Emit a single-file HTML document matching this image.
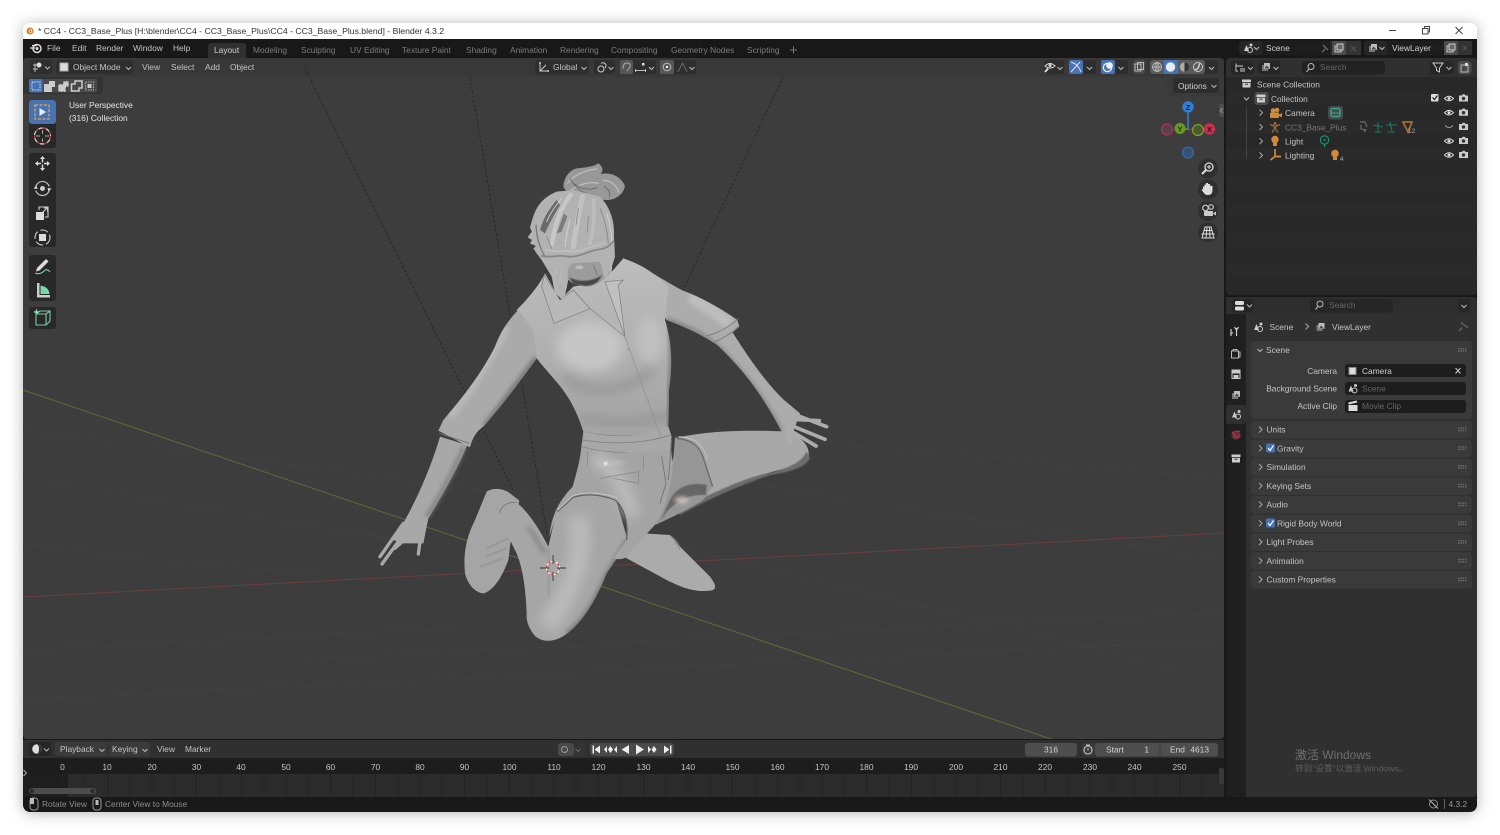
<!DOCTYPE html>
<html lang="en"><head><meta charset="utf-8"><title>Blender 4.3.2</title>
<style>
html,body{margin:0;padding:0;width:1500px;height:835px;overflow:hidden;background:#fff}
svg{display:block;filter:blur(.35px)}
text{font-family:"Liberation Sans","Noto Sans CJK SC",sans-serif;font-size:8.4px;fill:#c4c4c4}
.d{fill:#8a8a8a}.m{fill:#7c7c7c}.w{fill:#d0d0d0}.e{text-anchor:end}.c{text-anchor:middle}.f{fill:#666}
.ic{fill:none;stroke:#c8c8c8;stroke-width:1.1}
</style></head><body>
<svg width="1500" height="835" viewBox="0 0 1500 835" xmlns="http://www.w3.org/2000/svg">
<defs>
<filter id="sh" x="-30%" y="-30%" width="160%" height="160%"><feDropShadow dx="0" dy="1" stdDeviation="7" flood-color="#000" flood-opacity=".3"/></filter>
<filter id="b1" x="-50%" y="-50%" width="200%" height="200%"><feGaussianBlur stdDeviation="16"/></filter>
<filter id="b2" x="-50%" y="-50%" width="200%" height="200%"><feGaussianBlur stdDeviation="6"/></filter>
<filter id="b3" x="-20%" y="-20%" width="140%" height="140%"><feGaussianBlur stdDeviation="1.500"/></filter>
<linearGradient id="tg" x1="0" y1="0" x2="0" y2="1"><stop offset="0" stop-color="#bdbdbd"/><stop offset="1" stop-color="#a4a4a4"/></linearGradient>
<clipPath id="win"><rect x="23" y="23" width="1454" height="789" rx="7"/></clipPath>
<clipPath id="vp"><rect x="23" y="58" width="1201" height="681" rx="4"/></clipPath>
<clipPath id="cLeg"><path d="M470 1058C505 1085 540 1140 565 1190L590 1080 640 1030 765 1040 803 1170C790 1200 760 1240 740 1270C700 1370 660 1420 622 1450C580 1482 545 1475 525 1458C505 1435 498 1410 500 1390C497 1320 490 1260 470 1210C440 1150 425 1120 418 1090C425 1065 445 1055 470 1058Z"/></clipPath>
<clipPath id="cTorso"><path d="M470 480C500 450 535 410 555 370L600 450 640 410 720 395 760 360 790 325C850 345 890 375 925 410L915 510C940 590 935 660 927 720L925 840C820 862 740 860 670 845C650 780 625 740 600 708C570 672 550 650 530 625Z"/></clipPath>
<clipPath id="cRA"><path d="M790 325C850 350 910 390 965 420C1030 445 1090 480 1132 510L1138 530 1118 548C1170 630 1220 700 1272 750L1320 790 1290 870 1265 845C1200 720 1140 650 1072 585C1010 545 960 525 920 510Z"/></clipPath>
<clipPath id="cLA"><path d="M475 480C440 515 420 550 405 590C365 670 310 740 250 810L235 842 250 858C225 940 180 1040 130 1110L100 1170 165 1170 190 1180 205 1105C250 1030 290 960 322 885L332 888C340 855 355 840 370 830C440 750 490 680 530 625L520 540Z"/></clipPath>
<clipPath id="cHair"><path d="M515 215C530 160 555 140 590 125L640 120 720 140C750 170 765 215 762 260L765 320C755 355 745 375 735 390L720 335 640 340C620 350 622 370 625 390L612 450 585 430 575 380 545 330 530 310 520 295 528 288 510 280 516 270 503 262 515 245 510 232Z"/></clipPath>
<path id="cd" d="M-2.500-1 0 1.500 2.500-1" fill="none" stroke="#bbb" stroke-width="1"/>
<path id="cr" d="M-1.500-3 1.500 0-1.500 3" fill="none" stroke="#aaa" stroke-width="1"/>
<g id="eye"><path d="M-4.500 0Q0-4.500 4.500 0Q0 4.500-4.500 0Z" fill="none" stroke="#ddd" stroke-width="1"/><circle r="1.500" fill="#ddd"/></g>
<g id="cam"><path d="M-4.500-2.500H-1.500L-.8-3.700H1.200L2-2.500H4.500V3.500H-4.500Z" fill="#ccc"/><circle cy=".5" r="1.700" fill="#333"/></g>
<g id="dots" fill="#6e6e6e"><rect x="0" y="0" width="1.400" height="1.400"/><rect x="2.300" y="0" width="1.400" height="1.400"/><rect x="4.600" y="0" width="1.400" height="1.400"/><rect x="6.900" y="0" width="1.400" height="1.400"/><rect x="0" y="2.300" width="1.400" height="1.400"/><rect x="2.300" y="2.300" width="1.400" height="1.400"/><rect x="4.600" y="2.300" width="1.400" height="1.400"/><rect x="6.900" y="2.300" width="1.400" height="1.400"/></g>
<g id="scn"><path d="M-4 3 -1.500-3 1 3Z" fill="#ccc"/><circle cx="3" cy="-3" r="1.500" fill="#ccc"/><circle cx="2" cy="2" r="2.500" fill="none" stroke="#ccc"/></g>
<g id="vl"><rect x="-4" y="-2" width="6" height="6" fill="#777"/><rect x="-2" y="-4" width="6" height="6" fill="#bbb"/><path d="M-1.500 1.500 .5-1.500 3.500 1.500Z" fill="#444"/></g>
<g id="dup"><rect x="-4" y="-2" width="6" height="6" fill="none" stroke="#ccc"/><rect x="-2" y="-4" width="6" height="6" fill="#666" stroke="#ccc"/></g>
<g id="col"><rect x="-4.500" y="-4" width="9" height="2.500" fill="#ccc"/><path d="M-4-.8H4V4H-4Z" fill="#ccc"/><rect x="-1.500" y=".2" width="3" height="1" fill="#333"/></g>
</defs>

<rect x="23" y="23" width="1454" height="789" rx="7" fill="#fff" filter="url(#sh)"/>
<g clip-path="url(#win)">
<rect x="23" y="23" width="1454" height="16" fill="#fff"/>
<rect x="23" y="39" width="1454" height="773" fill="#181818"/>

<!-- title bar -->
<circle cx="30" cy="31" r="3.500" fill="#e87d0d"/><circle cx="30.500" cy="31" r="1.700" fill="#fff"/><circle cx="30.500" cy="31" r=".9" fill="#2c5f9e"/>
<text x="38" y="34" style="font-size:8.670px;fill:#333">* CC4 - CC3_Base_Plus [H:\blender\CC4 - CC3_Base_Plus\CC4 - CC3_Base_Plus.blend] - Blender 4.3.2</text>
<path d="M1389 30.500H1396" stroke="#444"/><rect x="1422.500" y="28.500" width="5.500" height="5.500" fill="none" stroke="#444"/><path d="M1424.500 28V26.500H1429.500V32H1428.500" fill="none" stroke="#444"/><path d="M1455.500 27 1462.500 34M1462.500 27 1455.500 34" stroke="#444"/>

<!-- top bar -->
<g transform="translate(36 48)"><path d="M-6 0H-1M-4-2.500H1" stroke="#ddd" stroke-width="1.300"/><circle cx="1" cy=".5" r="4" fill="none" stroke="#ddd" stroke-width="1.500"/><circle cx="1" cy=".5" r="1.500" fill="#ddd"/></g>
<text x="47" y="51">File</text><text x="72" y="51">Edit</text><text x="96" y="51">Render</text><text x="133" y="51">Window</text><text x="173" y="51">Help</text>
<path d="M208 58V46Q208 43 211 43H243Q246 43 246 46V58Z" fill="#303030"/>
<text x="214" y="53" class="w">Layout</text>
<g><text class="m" x="253" y="53">Modeling</text><text class="m" x="301" y="53">Sculpting</text><text class="m" x="350" y="53">UV Editing</text><text class="m" x="402" y="53">Texture Paint</text><text class="m" x="466" y="53">Shading</text><text class="m" x="510" y="53">Animation</text><text class="m" x="560" y="53">Rendering</text><text class="m" x="611" y="53">Compositing</text><text class="m" x="671" y="53">Geometry Nodes</text><text class="m" x="747" y="53">Scripting</text></g>
<path d="M790 50H797M793.500 46.500V53.500" stroke="#777"/>

<!-- scene / view layer -->
<rect x="1239" y="41" width="122" height="14" rx="3" fill="#262626"/>
<use href="#scn" x="1248" y="48"/><use href="#cd" x="1256.500" y="48"/>
<rect x="1262" y="41" width="68" height="14" fill="#1d1d1d"/>
<text x="1266" y="51" style="fill:#d0d0d0">Scene</text>
<path d="M1322 52 1325 49M1323 45 1328 50" stroke="#666" stroke-width="1.500"/>
<rect x="1332" y="41" width="14" height="14" fill="#4a4a4a"/><use href="#dup" x="1339" y="48"/>
<rect x="1346" y="41" width="15" height="14" fill="#333"/><path d="M1351 46 1356 51M1356 46 1351 51" stroke="#555"/>
<rect x="1364" y="41" width="108" height="14" rx="3" fill="#262626"/>
<use href="#vl" x="1373" y="48"/><use href="#cd" x="1382" y="48"/>
<rect x="1387" y="41" width="57" height="14" fill="#1d1d1d"/>
<text x="1392" y="51" style="fill:#d0d0d0">ViewLayer</text>
<rect x="1444" y="41" width="14" height="14" fill="#4a4a4a"/><use href="#dup" x="1451" y="48"/>
<rect x="1458" y="41" width="14" height="14" fill="#333"/><path d="M1463 46 1467 50M1467 46 1463 50" stroke="#555"/>

<!-- viewport -->
<g clip-path="url(#vp)">
<rect x="23" y="58" width="1201" height="681" fill="#3d3d3d"/>
<g stroke="#424242" stroke-width=".8" fill="none">
<path d="M23 430 560 500M23 478 400 540M23 545 360 580M650 540 1224 680M760 485 1224 560M800 440 1224 480M23 700 1224 640M300 660 1224 612M23 650 460 628"/>
</g>
<rect x="23" y="58" width="1201" height="19" fill="#383838"/>
<path d="M23 597 1224 533" stroke="#6b3f3f" stroke-width="1"/>
<path d="M23 390 1060 742" stroke="#5e6b36" stroke-width="1"/>
<g stroke="#232323" stroke-width=".8" stroke-dasharray="2.500 2" fill="none">
<path d="M305 68 513 490M470 78 547 533M783 77 683 290"/>
</g>

<!-- FIGURE -->
<g transform="translate(360 150) scale(.33333)">
<!-- left shoe -->
<path d="M380 1025C400 1012 430 1015 450 1030L478 1052C470 1090 460 1120 455 1150L445 1230C425 1285 400 1320 372 1330C345 1330 322 1300 315 1270C308 1200 325 1150 345 1110Z" fill="#a5a5a5"/>
<path d="M380 1195 445 1165M375 1220 440 1195M360 1250 430 1225" stroke="#8c8c8c" stroke-width="5" filter="url(#b3)" opacity=".7"/>
<!-- right shoe -->
<path d="M850 1150 930 1155C945 1165 955 1180 960 1190L1050 1280C1072 1310 1068 1318 1052 1322C1000 1328 960 1310 920 1290L795 1222Z" fill="#ababab"/>
<path d="M930 1155 960 1190M940 1165 960 1200" stroke="#7c7c7c" stroke-width="2" fill="none"/>
<!-- far thigh -->
<path d="M955 862C1060 840 1180 840 1282 845C1325 860 1352 890 1345 920C1330 945 1290 955 1250 962C1170 985 1110 1010 1050 1040C990 1075 940 1100 885 1125C915 1060 930 1000 935 940Z" fill="#a8a8a8"/>
<path d="M950 1080C1020 1050 1110 1000 1200 975C1270 960 1320 945 1340 905L1350 925C1330 960 1270 968 1230 975C1130 1010 1040 1050 960 1095Z" fill="#6c6c6c" filter="url(#b3)"/>
<!-- near leg -->
<path d="M470 1058C505 1085 540 1140 565 1190L590 1080 640 1030 765 1040 803 1170C790 1200 760 1240 740 1270C700 1370 660 1420 622 1450C580 1482 545 1475 525 1458C505 1435 498 1410 500 1390C497 1320 490 1260 470 1210C440 1150 425 1120 418 1090C425 1065 445 1055 470 1058Z" fill="#a6a6a6"/>
<g clip-path="url(#cLeg)">
<path d="M650 1100C680 1200 640 1320 560 1430" fill="none" stroke="#bababa" stroke-width="60" filter="url(#b1)"/>
<path d="M810 1170 745 1275C700 1380 660 1430 622 1455" fill="none" stroke="#7c7c7c" stroke-width="24" filter="url(#b2)"/>
<path d="M565 1200 568 1340" stroke="#8e8e8e" stroke-width="7" filter="url(#b2)"/>
<path d="M505 1130 555 1210" stroke="#8a8a8a" stroke-width="14" filter="url(#b2)"/>
</g>
<path d="M418 1090C425 1065 445 1055 470 1058" fill="none" stroke="#6d6d6d" stroke-width="2"/>
<!-- far shorts leg -->
<path d="M945 862C990 865 1015 880 1030 925L1058 1010 1030 1050C990 1075 940 1100 885 1125C920 1050 935 1000 938 950Z" fill="#969696"/>
<path d="M900 1115C930 1060 985 1030 1038 1035L1040 1005C990 995 950 1010 930 1050Z" fill="#656565" filter="url(#b3)"/>
<ellipse cx="965" cy="1050" rx="22" ry="10" fill="#c9bdb2" filter="url(#b2)"/>
<path d="M950 865C1000 870 1020 890 1032 930L1058 1010" fill="none" stroke="#6c6c6c" stroke-width="4"/>
<path d="M955 860C1010 860 1032 890 1042 930" fill="none" stroke="#c4c4c4" stroke-width="2.500"/>
<!-- shorts -->
<path d="M665 880 930 860 938 950C930 1040 910 1090 880 1130L820 1195C805 1225 785 1232 760 1225L800 1170C806 1110 790 1070 765 1050C715 1030 670 1032 640 1042L592 1085 568 1160C575 1090 600 1050 638 1010C655 950 662 920 665 880Z" fill="#a4a4a4"/>
<path d="M700 920C780 960 790 1020 820 1100" fill="none" stroke="#b9b9b9" stroke-width="50" filter="url(#b1)"/>
<path d="M592 1085 640 1042C670 1032 715 1030 765 1050C790 1070 806 1110 800 1170" fill="none" stroke="#606060" stroke-width="3.500"/>
<path d="M594 1080 640 1036C680 1024 730 1028 772 1044" fill="none" stroke="#c8c8c8" stroke-width="2.500"/>
<path d="M666 890C750 915 850 910 930 890M682 905V950M850 915V960M720 985 835 965V1000L760 985" fill="none" stroke="#7f7f7f" stroke-width="1.800"/>
<path d="M905 920 918 1000 900 1060M935 870 925 990" fill="none" stroke="#6e6e6e" stroke-width="2.500"/>
<circle cx="737" cy="941" r="6" fill="#f4f4f4"/>
<path d="M715 945 790 935" stroke="#c4c4c4" stroke-width="8" filter="url(#b2)"/>
<!-- right arm -->
<path d="M790 325C850 350 910 390 965 420C1030 445 1090 480 1132 510L1138 530 1118 548C1170 630 1220 700 1272 750L1320 790 1290 870 1265 845C1200 720 1140 650 1072 585C1010 545 960 525 920 510Z" fill="#acacac"/>
<g fill="none" stroke="#acacac" stroke-width="11" stroke-linecap="round"><path d="M1300 792 1400 830M1295 808 1378 812M1290 825 1395 868M1280 835 1368 888M1268 820 1292 876"/></g>
<g clip-path="url(#cRA)">
<path d="M990 440C1040 470 1080 500 1110 520" stroke="#bdbdbd" stroke-width="36" fill="none" filter="url(#b2)"/>
<path d="M1072 590C1140 660 1200 730 1262 845" stroke="#868686" stroke-width="18" fill="none" filter="url(#b2)"/>
<path d="M920 510C980 530 1030 555 1072 590" stroke="#808080" stroke-width="14" fill="none" filter="url(#b2)"/>
</g>
<path d="M1040 558C1085 545 1115 525 1135 505M1058 578C1090 565 1115 550 1135 530" stroke="#7a7a7a" stroke-width="2.500" fill="none"/>
<!-- left forearm + hand -->
<path d="M240 860 322 885C290 960 250 1030 205 1105L190 1180 130 1180 100 1170C150 1090 205 980 240 860Z" fill="#a8a8a8"/>
<g fill="none" stroke="#a8a8a8" stroke-width="10" stroke-linecap="round"><path d="M130 1120 60 1220M140 1140 66 1242M165 1140 105 1195M186 1130 175 1212"/></g>
<path d="M312 890C275 975 240 1040 200 1100" stroke="#7f7f7f" stroke-width="12" fill="none" filter="url(#b2)"/>
<!-- torso -->
<path d="M470 480C500 450 535 410 555 370L600 450 640 410 720 395 760 360 790 325C850 345 890 375 925 410L915 510C940 590 935 660 927 720L925 840C820 862 740 860 670 845C650 780 625 740 600 708C570 672 550 650 530 625Z" fill="url(#tg)"/>
<g clip-path="url(#cTorso)">
<ellipse cx="690" cy="590" rx="100" ry="75" fill="#c6c6c6" filter="url(#b1)"/>
<ellipse cx="870" cy="570" rx="40" ry="70" fill="#c0c0c0" filter="url(#b1)"/>
<path d="M610 680C680 740 790 730 880 660" stroke="#939393" stroke-width="22" fill="none" filter="url(#b1)"/>
<path d="M660 800C760 825 850 825 930 790" stroke="#949494" stroke-width="22" fill="none" filter="url(#b1)"/>
<path d="M925 500C940 590 935 660 927 720L925 840" stroke="#7b7b7b" stroke-width="14" fill="none" filter="url(#b2)"/>
</g>
<!-- left arm -->
<path d="M475 480C440 515 420 550 405 590C365 670 310 740 250 810L235 842 330 892C340 855 355 840 370 830C440 750 490 680 530 625L520 540Z" fill="#aaaaaa"/>
<g clip-path="url(#cLA)">
<path d="M375 830C440 745 490 680 530 625" stroke="#7a7a7a" stroke-width="20" fill="none" filter="url(#b2)"/>
<path d="M440 530C390 630 330 720 270 800" stroke="#b8b8b8" stroke-width="26" fill="none" filter="url(#b2)"/>
</g>
<path d="M238 850 328 880" stroke="#777" stroke-width="2.500"/>
<!-- waist band -->
<path d="M670 845C760 865 850 860 925 830L935 860 930 895C850 915 750 910 665 885Z" fill="#a8a8a8"/>
<path d="M668 870C760 885 860 880 932 855" stroke="#7e7e7e" stroke-width="2.500" fill="none"/>
<path d="M795 560 880 800 905 865" stroke="#8f8f8f" stroke-width="2" fill="none"/>
<circle cx="838" cy="675" r="4" fill="#9a9a9a"/><circle cx="864" cy="750" r="4" fill="#9a9a9a"/><circle cx="805" cy="598" r="3" fill="#9a9a9a"/>
<!-- collar -->
<path d="M553 375 545 410 582 520 690 476 640 420 600 450Z" fill="#b8b8b8" stroke="#7b7b7b" stroke-width="2"/>
<path d="M735 395 795 560 775 405 790 390Z" fill="#c0c0c0" stroke="#7c7c7c" stroke-width="2"/>
<path d="M690 476 795 560" stroke="#8a8a8a" stroke-width="2.500"/>
<!-- face -->
<path d="M600 345C640 315 700 310 742 312L745 370C730 395 705 408 680 408L640 402C618 385 605 365 600 345Z" fill="#9c9c9c"/>
<path d="M628 382C660 398 700 395 725 375C720 395 700 408 675 408L640 402Z" fill="#464646" filter="url(#b3)"/>
<ellipse cx="658" cy="352" rx="12" ry="6" fill="#bdbdbd"/><ellipse cx="722" cy="322" rx="14" ry="7" fill="#b8b8b8"/>
<path d="M700 345 712 375" stroke="#777" stroke-width="3"/>
<!-- hair -->
<path d="M610 110C612 80 630 60 650 55C680 52 700 50 715 40C730 50 730 62 722 72C760 65 785 85 795 108C790 135 765 150 740 150C710 148 690 147 670 145C640 140 620 130 610 110Z" fill="#989898"/>
<g fill="none">
<path d="M622 100C640 75 675 62 710 56M632 122C660 100 690 95 716 100M728 92C750 90 770 105 778 128" stroke="#c2c2c2" stroke-width="3.500"/>
<path d="M640 100C665 118 690 122 712 112M732 108C748 120 752 130 748 142M630 85C650 120 680 135 705 142" stroke="#636363" stroke-width="2.500"/>
</g>
<path d="M515 215C530 160 555 140 590 125L640 120 720 140C750 170 765 215 762 260L765 320C755 355 745 375 735 390L720 335 640 340C620 350 622 370 625 390L612 450 585 430 575 380 545 330 530 310 520 295 528 288 510 280 516 270 503 262 515 245 510 232Z" fill="#b2b2b2"/>
<g clip-path="url(#cHair)" fill="none" stroke-linecap="round">
<path d="M632 135C600 175 585 225 575 285" stroke="#cdcdcd" stroke-width="13" opacity=".75"/>
<path d="M668 140C655 190 648 235 640 290" stroke="#c9c9c9" stroke-width="16" opacity=".7"/>
<path d="M700 150C705 195 700 240 690 280" stroke="#c2c2c2" stroke-width="10" opacity=".7"/>
<path d="M590 150C565 180 550 205 540 240L555 250C565 225 585 190 600 165Z" fill="#6a6a6a" stroke="none"/>
<path d="M612 190 590 250 605 245 622 200Z" fill="#7c7c7c" stroke="none"/>
<path d="M720 175C735 210 742 240 745 280M655 175 648 225M685 200 682 245M560 260 575 295" stroke="#868686" stroke-width="2.500"/>
<path d="M605 145C585 170 570 190 560 215M630 210C622 240 618 265 615 290M740 190C750 220 756 250 755 280" stroke="#d6d6d6" stroke-width="2.500"/>
<path d="M528 225C530 265 540 295 555 320" stroke="#7a7a7a" stroke-width="4"/>
<path d="M545 318C575 325 600 312 625 320C660 322 690 300 720 298C738 296 752 285 762 272" stroke="#868686" stroke-width="5"/>
<path d="M560 300C590 310 610 298 640 305C670 305 700 285 735 280" stroke="#c0c0c0" stroke-width="5"/>
</g>
<path d="M590 355C575 400 585 425 605 445M608 345C595 385 602 400 620 412M745 315C760 345 755 370 738 392" stroke="#b8b8b8" stroke-width="5" fill="none"/>
</g>
<!-- 3D cursor -->
<g><circle cx="553" cy="568" r="6.500" fill="none" stroke="#fff" stroke-width="1.200"/><circle cx="553" cy="568" r="6.500" fill="none" stroke="#d33" stroke-width="1.200" stroke-dasharray="2.500 2.600"/><path d="M540 568H549M557 568H566M553 555V564M553 572V581" stroke="#333" stroke-width=".9"/></g>

<!-- overlay text -->
<text x="69" y="108" style="fill:#e6e6e6">User Perspective</text>
<text x="69" y="121" style="fill:#e6e6e6">(316) Collection</text>

<!-- select modes -->
<path d="M23 77H103V90Q103 94 99 94H23Z" fill="#333"/>
<rect x="29" y="79" width="68" height="13.500" rx="2" fill="#4a4a4a"/>
<rect x="29" y="79" width="13.500" height="13.500" rx="2" fill="#4772b3"/>
<rect x="32" y="82" width="8" height="8" fill="#4772b3" stroke="#cfd8ea" stroke-dasharray="1.500 1"/>
<path d="M44 84H49V81H55V87H52V92H44Z" fill="#ccc"/>
<path d="M58 84H63V81H69V87H66V92H58Z" fill="#ccc" stroke="#4a4a4a" stroke-dasharray="2 1"/>
<path d="M71.500 84H75V81H82V88H79V91H71.500Z" fill="none" stroke="#ccc" stroke-width="1.500"/>
<rect x="85.500" y="82" width="8" height="8" fill="none" stroke="#aaa" stroke-dasharray="1.500 1"/><rect x="87.500" y="84" width="4" height="4" fill="#ccc"/>

<!-- tool column -->
<rect x="29" y="100" width="27" height="48" rx="3" fill="#282828"/>
<rect x="29" y="100" width="27" height="24" rx="3" fill="#4772b3"/>
<rect x="35" y="105" width="14" height="14" fill="none" stroke="#e6a84a" stroke-width="1.200" stroke-dasharray="3 1.500"/><path d="M39.500 108 46 112 39.500 116Z" fill="#eee"/>
<circle cx="42.500" cy="136" r="8" fill="none" stroke="#ddd" stroke-width="1.200"/><circle cx="42.500" cy="136" r="8" fill="none" stroke="#a33" stroke-width="1.200" stroke-dasharray="3.500 4"/><path d="M36 136H40M45 136H49M42.500 130V134M42.500 138.500V142" stroke="#aaa"/>
<rect x="29" y="153" width="27" height="94" rx="3" fill="#282828"/>
<path d="M42.500 156 45 159H43.200V162.500H41.800V159H40ZM42.500 171 40 168H41.800V164.500H43.200V168H45ZM35 163.500 38 161V162.800H41V164.200H38V166ZM50 163.500 47 166V164.200H44V162.800H47V161Z" fill="#ddd"/>
<g transform="translate(42.500 188.500)"><circle r="7" class="ic"/><rect x="-9" y="-2" width="18" height="4" fill="#282828"/><circle r="2.500" fill="#ccc"/><path d="M-9 0-6-3-5 .5ZM9 0 6 3 5-.5Z" fill="#ddd"/></g>
<rect x="36" y="212" width="8" height="8" fill="#ddd"/><path d="M39 210V207H48V217H45M41 214 47 208M44 208H47.500V211.500" fill="none" stroke="#ccc" stroke-width="1.100"/>
<g transform="translate(42.500 237.500)"><circle r="7.500" fill="none" stroke="#ccc" stroke-width="1.100" stroke-dasharray="8 3"/><rect x="-4" y="-4" width="8" height="8" fill="#ddd" stroke="#282828"/></g>
<rect x="29" y="255" width="27" height="46" rx="3" fill="#282828"/>
<path d="M37 268 46 259 48.500 261.500 39.500 270.500 36 271.500Z" fill="#ddd"/><path d="M35 273Q40 275 44 271Q47 268 50 272" fill="none" stroke="#7cd3ad" stroke-width="1.100"/>
<path d="M37 283H39.500V295H50V297.500H37Z" fill="#ccc"/><path d="M40.500 294V285.500Q49 287 49.500 294Z" fill="#7cd3ad"/>
<rect x="29" y="307" width="27" height="22" rx="3" fill="#282828"/>
<path d="M36 314H46V325H36ZM36 314 40 311H50V321L46 325M46 314 50 311" fill="none" stroke="#7fc4a5" stroke-width="1.100"/><path d="M34 312H39M36.500 309.500V314.500" stroke="#8fe0b5" stroke-width="1.400"/>

<!-- gizmo -->
<path d="M1188 113V130" stroke="#2e7fd6" stroke-width="1.500"/><path d="M1180 129H1188" stroke="#6a9a1f" stroke-width="1.500"/><path d="M1188 129.500H1204" stroke="#b0304f" stroke-width="1.500"/>
<circle cx="1167" cy="129.500" r="5.500" fill="#56424a" stroke="#bb3350" stroke-width="1"/>
<circle cx="1198" cy="130" r="5.500" fill="#4e5a32" stroke="#7db51e" stroke-width="1"/>
<circle cx="1188" cy="152.500" r="5.500" fill="#37526f" stroke="#2e70c0" stroke-width="1"/>
<circle cx="1180" cy="128.500" r="5.500" fill="#6a9a1f"/><text x="1180" y="131.500" class="c" style="font-size:7.500px;font-weight:bold;fill:#1d2a08">Y</text>
<circle cx="1188" cy="107" r="5.700" fill="#2e7fd6"/><text x="1188" y="110" class="c" style="font-size:7.500px;font-weight:bold;fill:#0c2540">Z</text>
<circle cx="1209.500" cy="129" r="5.700" fill="#c8304f"/><text x="1209.500" y="132" class="c" style="font-size:7.500px;font-weight:bold;fill:#3c0d18">X</text>

<g fill="#2f2f2f"><circle cx="1208" cy="168.500" r="10"/><circle cx="1208" cy="189.500" r="10"/><circle cx="1208" cy="211" r="10"/><circle cx="1208" cy="232.500" r="10"/></g>
<circle cx="1209" cy="167" r="4" fill="#2f2f2f" stroke="#ddd" stroke-width="1.300"/><path d="M1206 170 1202 174" stroke="#ddd" stroke-width="2"/><path d="M1207 167H1211M1209 165V169" stroke="#ddd"/>
<path d="M1203 189V186.500L1204.500 186.500V184.500L1206 184.500V183L1208 183V184L1210 184V185.500L1212.500 186V191Q1212 195 1208 195Q1205 195 1204 193L1201.500 190Z" fill="#ddd"/>
<circle cx="1205.500" cy="208" r="2.800" fill="none" stroke="#ccc" stroke-width="1.200"/><circle cx="1211" cy="207" r="2.300" fill="none" stroke="#ccc" stroke-width="1.200"/><rect x="1204" y="211" width="9" height="5" rx="1" fill="#ccc"/><path d="M1213 213.500 1216 211.500V215.500Z" fill="#ccc"/>
<path d="M1205 227H1211L1214 238H1202ZM1201.500 234H1214.500M1203.500 230.500H1212.500M1207 227 1206 238M1209.500 227 1210 238" fill="none" stroke="#ddd" stroke-width="1"/>

<!-- options -->
<path d="M1167 77H1224V97H1174Q1167 97 1167 90Z" fill="#3a3a3a"/>
<rect x="1173" y="78" width="46" height="15" rx="3" fill="#2d2d2d"/>
<text x="1178" y="89" style="fill:#cfcfcf">Options</text><use href="#cd" x="1214" y="86"/>
<rect x="1219" y="104" width="5" height="13" rx="2" fill="#4e4e4e"/><path d="M1222.500 108 1220.500 110.500 1222.500 113" fill="none" stroke="#999"/>
</g>

<!-- viewport header widgets -->
<rect x="30" y="60" width="22" height="14" rx="3" fill="#2e2e2e"/>
<path d="M35 63.500V72M33 65H41M33 69H38" stroke="#bbb" stroke-width="1"/><circle cx="39" cy="65" r="2.500" fill="#ddd"/><use href="#cd" x="47.500" y="67.500"/>
<rect x="56" y="60" width="77" height="14" rx="3" fill="#2e2e2e"/>
<rect x="60" y="63" width="8" height="8" fill="#ddd" stroke="#aaa"/><text x="73" y="70">Object Mode</text><use href="#cd" x="128.500" y="68"/>
<text x="142" y="70">View</text><text x="171" y="70">Select</text><text x="205" y="70">Add</text><text x="230" y="70">Object</text>

<rect x="535" y="60" width="54" height="14" rx="3" fill="#2e2e2e"/>
<path d="M540 63V71H548M540 71 546 65" fill="none" stroke="#ccc"/><circle cx="540" cy="63" r="1" fill="#ccc"/><circle cx="548" cy="71" r="1" fill="#ccc"/>
<text x="553" y="70">Global</text><use href="#cd" x="584" y="68"/>
<rect x="594" y="60" width="21" height="14" rx="3" fill="#2e2e2e"/><circle cx="601" cy="69" r="3" fill="none" stroke="#ccc"/><path d="M601 63.500a3 3 0 1 1 4 4.500" fill="none" stroke="#ccc"/><use href="#cd" x="611" y="68"/>
<rect x="620" y="60" width="36" height="14" rx="3" fill="#2e2e2e"/><rect x="620" y="60" width="13" height="14" rx="2" fill="#565656"/>
<path d="M623 69Q623 63 627 63Q631 63 630 67L627 71" fill="none" stroke="#aaa"/>
<path d="M635.500 69V72M645.500 69V72M635.500 70.500H645.500" stroke="#bbb"/><rect x="642" y="63" width="2.500" height="2.500" fill="#ddd"/><use href="#cd" x="651.500" y="68"/>
<rect x="660" y="60" width="36" height="14" rx="3" fill="#2e2e2e"/><rect x="660" y="60" width="14" height="14" rx="2" fill="#565656"/><circle cx="667" cy="67" r="3.800" fill="none" stroke="#bbb"/><circle cx="667" cy="67" r="1.200" fill="#eee"/><path d="M678 72 682.500 63 687 72" fill="none" stroke="#666"/><use href="#cd" x="692" y="68"/>

<rect x="1044" y="60" width="20" height="14" rx="3" fill="#2e2e2e"/><path d="M1045 66Q1050 61 1055 66Q1050 70 1045 66Z" fill="none" stroke="#ddd"/><circle cx="1050" cy="65.500" r="1.500" fill="#ddd"/><path d="M1045 72 1048 68.500" stroke="#ddd" stroke-width="2"/><use href="#cd" x="1060" y="68"/>
<rect x="1069" y="60" width="27" height="14" rx="3" fill="#2e2e2e"/><rect x="1069" y="60" width="14" height="14" rx="2" fill="#4772b3"/><path d="M1071 62Q1078 64 1081 72M1071 72 1080 62" fill="none" stroke="#dde"/><use href="#cd" x="1089.500" y="68"/>
<rect x="1101" y="60" width="27" height="14" rx="3" fill="#2e2e2e"/><rect x="1101" y="60" width="14" height="14" rx="2" fill="#4772b3"/><circle cx="1107.500" cy="67.500" r="4.200" fill="none" stroke="#eee" stroke-width="1.300"/><circle cx="1109.500" cy="65.500" r="3.400" fill="#eee"/><use href="#cd" x="1121" y="68"/>
<rect x="1133" y="60" width="12" height="14" rx="3" fill="#4a4a4a"/><rect x="1135" y="64" width="6" height="7" fill="none" stroke="#bbb"/><rect x="1137.500" y="62.500" width="6" height="7" fill="none" stroke="#bbb"/>
<rect x="1150" y="60" width="68" height="14" rx="3" fill="#2e2e2e"/><rect x="1150" y="60" width="55" height="14" rx="3" fill="#5a5a5a"/>
<rect x="1164" y="60" width="14" height="14" fill="#4772b3"/>
<g fill="none" stroke="#bbb" stroke-width=".9"><circle cx="1157" cy="67" r="4.500"/><path d="M1152.500 67H1161.500M1157 62.500V71.500"/><ellipse cx="1157" cy="67" rx="2" ry="4.500"/></g>
<circle cx="1170.500" cy="67" r="4.700" fill="#e8ecf4"/>
<circle cx="1184.500" cy="67" r="4.700" fill="#aaa"/><path d="M1184.500 62.300a4.700 4.700 0 0 1 0 9.400Z" fill="#333"/>
<circle cx="1198" cy="67" r="4.500" fill="none" stroke="#ccc"/><path d="M1195 70Q1199 69 1199.500 63.500" fill="none" stroke="#ccc" stroke-width="1.500"/>
<use href="#cd" x="1211.500" y="68"/>

<!-- Outliner -->
<rect x="1226" y="58" width="251" height="237" rx="4" fill="#282828"/>
<path d="M1226 77V62Q1226 58 1230 58H1473Q1477 58 1477 62V77Z" fill="#303030"/>
<rect x="1231" y="61" width="23" height="13.500" rx="3" fill="#262626"/><path d="M1236 63.500V71H1238M1236 66H1243M1240 69H1245M1240 71H1245" stroke="#ccc"/><use href="#cd" x="1250.500" y="68"/>
<rect x="1258" y="61" width="22" height="13.500" rx="3" fill="#262626"/><use href="#vl" x="1266" y="67"/><use href="#cd" x="1276" y="68"/>
<rect x="1302" y="61" width="83" height="13.500" rx="4" fill="#222"/><circle cx="1311" cy="66.500" r="3" fill="none" stroke="#bbb"/><path d="M1309 69 1306.500 72" stroke="#bbb"/><text x="1320" y="70" class="f">Search</text>
<rect x="1430" y="61" width="24" height="13.500" rx="3" fill="#262626"/><path d="M1433 63H1443L1439.500 68V72L1436.500 70.500V68Z" fill="none" stroke="#ccc"/><use href="#cd" x="1449" y="68"/>
<rect x="1458" y="61" width="13.500" height="13.500" rx="3" fill="#4a4a4a"/><rect x="1461" y="65" width="7" height="7" fill="none" stroke="#bbb"/><rect x="1465" y="63" width="3" height="3" fill="#ddd"/>
<g fill="#2a2a2a"><rect x="1227" y="91" width="250" height="14.200"/><rect x="1227" y="119.400" width="250" height="14.200"/><rect x="1227" y="147.800" width="250" height="14.200"/><rect x="1227" y="176.200" width="250" height="14.200"/><rect x="1227" y="204.600" width="250" height="14.200"/><rect x="1227" y="233" width="250" height="14.200"/><rect x="1227" y="261.400" width="250" height="14.200"/></g>
<use href="#col" x="1246.500" y="83.500"/><text x="1257" y="87.500">Scene Collection</text>
<use href="#cd" x="1246.500" y="98.500"/><rect x="1254.500" y="92" width="14" height="13" rx="2.500" fill="#4a4a4a"/><use href="#col" x="1261" y="98.500"/><text x="1271" y="102">Collection</text>
<rect x="1431" y="94" width="7.500" height="7.500" rx="1" fill="#ddd"/><path d="M1432.500 97.500 1434.500 99.500 1437.500 95.500" fill="none" stroke="#222" stroke-width="1.200"/>
<path d="M1246.500 108V159" stroke="#444"/>
<use href="#eye" x="1449" y="98.500"/><use href="#cam" x="1463.500" y="98"/>
<use href="#eye" x="1449" y="112.700"/><use href="#cam" x="1463.500" y="112.200"/>
<path d="M1445 125.500Q1449 129.500 1453 125.500" fill="none" stroke="#999"/><use href="#cam" x="1463.500" y="126.500"/>
<use href="#eye" x="1449" y="141"/><use href="#cam" x="1463.500" y="140.500"/>
<use href="#eye" x="1449" y="155"/><use href="#cam" x="1463.500" y="154.500"/>
<use href="#cr" x="1261" y="112.700"/><use href="#cr" x="1261" y="127"/><use href="#cr" x="1261" y="141.200"/><use href="#cr" x="1261" y="155.400"/>
<g fill="#d08a3c"><circle cx="1273" cy="110.500" r="2.300"/><circle cx="1277" cy="110" r="2.300"/><rect x="1270" y="112.500" width="9" height="5.500" rx="1"/><path d="M1279 114.500 1282 113V117.500L1279 116Z"/></g>
<text x="1285" y="116">Camera</text>
<rect x="1328" y="106" width="15" height="13.500" rx="3" fill="#4a4a4a"/><rect x="1331" y="108.500" width="9" height="8" rx="2" fill="none" stroke="#33a58a" stroke-width="1.500"/><path d="M1331 113H1340" stroke="#33a58a"/>
<path d="M1275 122 1273.500 126 1270 124.500M1275 122 1276.500 126 1280 124.500M1273.500 126 1275 128 1276.500 126M1275 128 1272 132.500M1275 128 1278 132.500" fill="none" stroke="#9c6d3c" stroke-width="1.300"/>
<text x="1285" y="130.500" style="fill:#777">CC3_Base_Plus</text>
<path d="M1360 122H1365L1367 127M1361 125 1361 129 1366 130M1366 130 1364 132" fill="none" stroke="#777"/>
<path d="M1378 122 1378 132M1373 125 1383 127M1375 132 1381 132M1390 122 1392 131M1386 125 1397 125M1388 132 1395 132" fill="none" stroke="#1c7a68" stroke-width="1.100"/>
<path d="M1403 122H1412L1408 132Z" fill="none" stroke="#9c6d3c" stroke-width="1.800"/><text x="1408" y="133" style="font-size:6.500px;fill:#aaa">12</text>
<circle cx="1275" cy="139.500" r="3.700" fill="#d08a3c"/><rect x="1273" y="143" width="4" height="3" fill="#d08a3c"/><text x="1285" y="144.500">Light</text>
<circle cx="1324.500" cy="140" r="4.200" fill="none" stroke="#149a7c" stroke-width="1.100"/><circle cx="1324.500" cy="140" r="1" fill="#149a7c"/><path d="M1324.500 144V147" stroke="#149a7c"/>
<path d="M1275 149V156.500M1275 156.500H1281M1275 156.500 1270.500 160" fill="none" stroke="#d08a3c" stroke-width="1.700"/><text x="1285" y="158.700">Lighting</text>
<circle cx="1335" cy="153.500" r="3.800" fill="#d08a3c"/><rect x="1333" y="157" width="4" height="3" fill="#d08a3c"/><text x="1340" y="161" style="font-size:6.500px;fill:#aaa">4</text>

<!-- Properties -->
<rect x="1226" y="297" width="251" height="500" rx="4" fill="#303030"/>
<path d="M1226 297H1473Q1477 297 1477 301V314H1226Z" fill="#2e2e2e"/>
<rect x="1226" y="314" width="20" height="483" fill="#1f1f1f"/>
<rect x="1232" y="299" width="21" height="13.500" rx="3" fill="#262626"/><rect x="1235" y="301" width="9" height="4" rx="1.500" fill="#ddd"/><rect x="1235" y="306.500" width="9" height="4" rx="1.500" fill="#ddd"/><use href="#cd" x="1249.500" y="305.500"/>
<rect x="1310" y="299" width="83" height="13.500" rx="4" fill="#262626"/><circle cx="1320" cy="304" r="3" fill="none" stroke="#bbb"/><path d="M1318 306.500 1315.500 309.500" stroke="#bbb"/><text x="1329" y="308" class="f">Search</text>
<rect x="1458" y="299" width="12" height="13.500" rx="3" fill="#262626"/><use href="#cd" x="1464" y="306"/>
<path d="M1231 329V336M1233 333H1231M1236.500 328 1236.500 336M1234.500 327 1236.500 330 1238.500 327" fill="none" stroke="#ccc" stroke-width="1.200"/>
<g fill="none" stroke="#bbb"><rect x="1231.500" y="351" width="7" height="7"/><path d="M1238.500 352H1240V357H1238.500M1233 351V349.500H1237V351"/></g>
<rect x="1231.500" y="369.500" width="9" height="3" fill="#ccc"/><path d="M1232 373H1240V378.500H1232Z" fill="none" stroke="#ccc"/><rect x="1233.500" y="375" width="5" height="3.500" fill="#ccc"/>
<use href="#vl" x="1236" y="395"/>
<rect x="1226" y="405" width="20" height="19" rx="3" fill="#303030"/><use href="#scn" x="1236" y="414.500"/>
<circle cx="1236" cy="435" r="4.700" fill="#6b2d35"/><path d="M1232 432Q1236 434 1235 437Q1238 438 1239.500 435M1236 431Q1238 432 1240 431" fill="none" stroke="#9c4552"/>
<use href="#col" x="1236" y="458.500"/>

<use href="#scn" x="1258" y="327"/><text x="1269.500" y="330">Scene</text><path d="M1305.500 323.500 1308.500 326.500 1305.500 329.500" fill="none" stroke="#aaa"/><use href="#vl" x="1320.500" y="327"/><text x="1332" y="330">ViewLayer</text>
<path d="M1459 331 1462 327.500M1461 322.500 1468 328" stroke="#5e5e5e" stroke-width="1.700"/>

<rect x="1251" y="341" width="221" height="78" rx="3.500" fill="#3a3a3a"/>
<use href="#cd" x="1260" y="350"/><text x="1266" y="353">Scene</text><use href="#dots" x="1458" y="348"/>
<text x="1337" y="374" class="e">Camera</text><text x="1337" y="391.500" class="e">Background Scene</text><text x="1337" y="409" class="e">Active Clip</text>
<rect x="1345" y="364" width="121" height="13" rx="3" fill="#1d1d1d"/><rect x="1345" y="382" width="121" height="13" rx="3" fill="#1d1d1d"/><rect x="1345" y="400" width="121" height="13" rx="3" fill="#1d1d1d"/>
<rect x="1349" y="367.500" width="7" height="7" fill="#ddd" stroke="#888"/><text x="1362" y="374" style="fill:#d0d0d0">Camera</text><path d="M1455.500 368 1460.500 373.500M1460.500 368 1455.500 373.500" stroke="#ccc"/>
<use href="#scn" x="1352.500" y="388.500"/><text x="1362" y="391.500" class="f">Scene</text>
<rect x="1348.500" y="405" width="9" height="6" fill="#ddd"/><path d="M1348.500 403.500 1357 401.500" stroke="#ddd" stroke-width="2"/><text x="1362" y="409" class="f">Movie Clip</text>

<g fill="#3a3a3a">
<rect x="1251" y="421" width="221" height="17.500" rx="3.500"/><rect x="1251" y="439.700" width="221" height="17.500" rx="3.500"/><rect x="1251" y="458.500" width="221" height="17.500" rx="3.500"/><rect x="1251" y="477.200" width="221" height="17.500" rx="3.500"/><rect x="1251" y="496" width="221" height="17.500" rx="3.500"/><rect x="1251" y="514.700" width="221" height="17.500" rx="3.500"/><rect x="1251" y="533.500" width="221" height="17.500" rx="3.500"/><rect x="1251" y="552.200" width="221" height="17.500" rx="3.500"/><rect x="1251" y="571" width="221" height="17.500" rx="3.500"/>
</g>
<g>
<use href="#cr" x="1260.500" y="429.500"/><text x="1266.500" y="432.500">Units</text><use href="#dots" x="1458" y="427.500"/>
<use href="#cr" x="1260.500" y="448.300"/><rect x="1266" y="443.500" width="9" height="9" rx="1.500" fill="#4772b3"/><path d="M1268 448 1270 450.500 1273.500 445.500" fill="none" stroke="#fff" stroke-width="1.200"/><text x="1277" y="451.300">Gravity</text><use href="#dots" x="1458" y="446.300"/>
<use href="#cr" x="1260.500" y="467"/><text x="1266.500" y="470">Simulation</text><use href="#dots" x="1458" y="465"/>
<use href="#cr" x="1260.500" y="485.800"/><text x="1266.500" y="488.800">Keying Sets</text><use href="#dots" x="1458" y="483.800"/>
<use href="#cr" x="1260.500" y="504.500"/><text x="1266.500" y="507.500">Audio</text><use href="#dots" x="1458" y="502.500"/>
<use href="#cr" x="1260.500" y="523.300"/><rect x="1266" y="518.500" width="9" height="9" rx="1.500" fill="#4772b3"/><path d="M1268 523 1270 525.500 1273.500 520.500" fill="none" stroke="#fff" stroke-width="1.200"/><text x="1277" y="526.300">Rigid Body World</text><use href="#dots" x="1458" y="521.300"/>
<use href="#cr" x="1260.500" y="542"/><text x="1266.500" y="545">Light Probes</text><use href="#dots" x="1458" y="540"/>
<use href="#cr" x="1260.500" y="560.800"/><text x="1266.500" y="563.800">Animation</text><use href="#dots" x="1458" y="558.800"/>
<use href="#cr" x="1260.500" y="579.500"/><text x="1266.500" y="582.500">Custom Properties</text><use href="#dots" x="1458" y="577.500"/>
</g>
<text x="1295" y="759" style="font-size:12px;fill:#6f6f6f">激活 Windows</text>
<text x="1295" y="771.500" style="font-size:8.600px;fill:#5e5e5e">转到"设置"以激活 Windows。</text>

<!-- Timeline -->
<path d="M23 740H1224V793Q1224 797 1220 797H27Q23 797 23 793Z" fill="#1d1d1d"/>
<rect x="23" y="740" width="1201" height="18" fill="#303030"/>
<rect x="29" y="742" width="22" height="14" rx="3" fill="#262626"/><circle cx="37" cy="749" r="4.800" fill="#ddd"/><path d="M37 744.200a4.800 4.800 0 0 1 0 9.600a3 4.800 0 0 0 2-4.800a3 4.800 0 0 0-2-4.800Z" fill="#333"/><use href="#cd" x="46.500" y="749.500"/>
<rect x="55" y="742" width="95" height="14" rx="3" fill="#3a3a3a"/><path d="M108 742V756" stroke="#2a2a2a"/>
<text x="60" y="752">Playback</text><use href="#cd" x="102" y="750"/>
<text x="112" y="752">Keying</text><use href="#cd" x="145" y="750"/>
<text x="157" y="752">View</text><text x="185" y="752">Marker</text>
<rect x="558" y="743" width="16" height="13" rx="3" fill="#4a4a4a"/><circle cx="564.500" cy="749.500" r="3" fill="none" stroke="#999"/><rect x="574" y="743" width="11" height="13" rx="3" fill="#333"/><use href="#cd" x="578" y="750" opacity=".4"/>
<rect x="590" y="743" width="84" height="13" rx="3" fill="#4a4a4a"/>
<g fill="#eee"><path d="M592.500 745.500H594V753.500H592.500ZM600 745.500V753.500L594.500 749.500Z"/><path d="M608 749.500 610.500 746 613 749.500 610.500 753ZM607 746V753L604 749.500ZM617 746V753L614 749.500Z"/><path d="M629 745V754L621.500 749.500Z"/><path d="M636 744.500V754.500L644 749.500Z"/><path d="M648 746V753L651 749.500ZM651.500 749.500 654 746 656.500 749.500 654 753Z"/><path d="M664 745.500V753.500L669.500 749.500ZM670 745.500H671.500V753.500H670Z"/></g>
<rect x="1025" y="743" width="52" height="13.500" rx="3" fill="#4e4e4e"/><text x="1051" y="752.500" class="c" style="fill:#d4d4d4">316</text>
<rect x="1082" y="743" width="13" height="13.500" rx="2" fill="#3a3a3a"/><circle cx="1088" cy="750" r="4" fill="none" stroke="#ccc" stroke-width="1.100"/><path d="M1088 748V750.500M1086 745H1090" stroke="#ccc"/>
<rect x="1095" y="743" width="123" height="13.500" rx="3" fill="#4e4e4e"/><path d="M1160 743V756.500" stroke="#3a3a3a"/>
<text x="1106" y="752.500" style="fill:#d4d4d4">Start</text><text x="1149" y="752.500" class="e" style="fill:#d4d4d4">1</text>
<text x="1170" y="752.500" style="fill:#d4d4d4">End</text><text x="1209" y="752.500" class="e" style="fill:#d4d4d4">4613</text>
<rect x="68" y="774" width="1156" height="23" fill="#2b2b2b"/>
<rect x="23" y="774" width="45" height="23" fill="#1e1e1e"/>
<g stroke="#232323" stroke-width="1">
<path d="M40 774V797M62.500 774V797M85 774V797M107.500 774V797M130 774V797M152 774V797M174 774V797M196.500 774V797M219 774V797M241.500 774V797M264 774V797M286 774V797M308 774V797M330.500 774V797M353 774V797M375.500 774V797M398 774V797M420 774V797M442 774V797M464.500 774V797M487 774V797M509.500 774V797M532 774V797M554 774V797M576 774V797M598.500 774V797M621 774V797M643.500 774V797M666 774V797M688 774V797M710 774V797M732.500 774V797M755 774V797M777.500 774V797M800 774V797M822 774V797M844 774V797M866.500 774V797M889 774V797M911.500 774V797M934 774V797M956 774V797M978 774V797M1000.500 774V797M1023 774V797M1045.500 774V797M1068 774V797M1090 774V797M1112 774V797M1134.500 774V797M1157 774V797M1179.500 774V797M1202 774V797"/>
</g>
<g>
<text class="c" x="62.500" y="770">0</text><text class="c" x="107" y="770">10</text><text class="c" x="152" y="770">20</text><text class="c" x="196.500" y="770">30</text><text class="c" x="241" y="770">40</text><text class="c" x="286" y="770">50</text><text class="c" x="330.500" y="770">60</text><text class="c" x="375.500" y="770">70</text><text class="c" x="420" y="770">80</text><text class="c" x="464.500" y="770">90</text><text class="c" x="509.500" y="770">100</text><text class="c" x="554" y="770">110</text><text class="c" x="598.500" y="770">120</text><text class="c" x="643.500" y="770">130</text><text class="c" x="688" y="770">140</text><text class="c" x="732.500" y="770">150</text><text class="c" x="777.500" y="770">160</text><text class="c" x="822" y="770">170</text><text class="c" x="866.500" y="770">180</text><text class="c" x="911" y="770">190</text><text class="c" x="956" y="770">200</text><text class="c" x="1000.500" y="770">210</text><text class="c" x="1045" y="770">220</text><text class="c" x="1090" y="770">230</text><text class="c" x="1134.500" y="770">240</text><text class="c" x="1179.500" y="770">250</text>
</g>
<use href="#cr" x="25" y="773"/>
<rect x="29" y="788" width="67" height="6" rx="3" fill="#4d4d4d"/><circle cx="32" cy="791" r="2.300" fill="#2c2c2c"/><circle cx="92.500" cy="791" r="2.300" fill="#2c2c2c"/>
<rect x="1219" y="768" width="5" height="16" rx="2" fill="#3a3a3a"/>

<!-- status bar -->
<rect x="30" y="798" width="8" height="12" rx="3" fill="none" stroke="#999"/><rect x="30" y="798" width="4" height="6" fill="#bbb"/><text x="42" y="807" style="fill:#8e8e8e">Rotate View</text>
<rect x="93" y="798" width="8" height="12" rx="3" fill="none" stroke="#999"/><rect x="95.500" y="800" width="3" height="5" fill="#bbb"/><text x="105" y="807" style="fill:#8e8e8e">Center View to Mouse</text>
<circle cx="1433.500" cy="804" r="4" fill="none" stroke="#888"/><path d="M1429 799.500 1438 808.500" stroke="#aaa" stroke-width="1.200"/><path d="M1444.500 799V809" stroke="#666"/>
<text x="1448.500" y="807" style="fill:#9a9a9a">4.3.2</text>
</g>
</svg>
</body></html>
